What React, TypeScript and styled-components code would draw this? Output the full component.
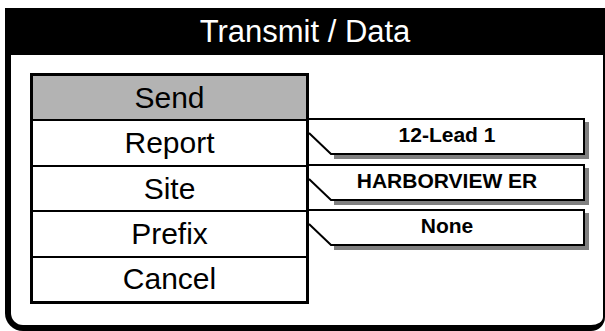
import styled, { createGlobalStyle } from 'styled-components'

const GlobalStyle = createGlobalStyle`
	body {
		margin: 0;
		background: #ffffff;
		font-family: "Liberation Sans", Arial, sans-serif;
	}
`

const Page = styled.div`
	padding: 8px 0 0 5px;
`
const Window = styled.div`
	width: 600px;
`
const TitleBar = styled.div`
	height: 47px;
	background: #000000;
	color: #ffffff;
	font-size: 31px;
	line-height: 47px;
	text-align: center;
`
const Body = styled.div`
	display: flex;
	height: 276px;
	box-sizing: border-box;
	border-left: 6px solid #000000;
	border-right: 2px solid #000000;
	border-bottom: 6px solid #000000;
	border-radius: 0 0 14px 18px;
	padding: 18px 0 0 19px;
`
const Menu = styled.div`
	display: flex;
	flex-direction: column;
	width: 279px;
	height: 231px;
	box-sizing: border-box;
	border: 3px solid #000000;
`
const MenuItem = styled.div<{ $active?: boolean }>`
	flex: 1;
	display: flex;
	align-items: center;
	justify-content: center;
	font-size: 30px;
	color: #000000;
	background: ${(p) => (p.$active ? '#b3b3b3' : '#ffffff')};
	& + & {
		border-top: 2px solid #000000;
	}
`
const Values = styled.div`
	display: flex;
	flex-direction: column;
	gap: 8.5px;
	padding-top: 45px;
`
const ValueBox = styled.div`
	position: relative;
	width: 280px;
	height: 37px;
`
const Outline = styled.svg`
	position: absolute;
	left: 0;
	top: 0;
	overflow: visible;
`
const ValueText = styled.div`
	position: relative;
	width: 276px;
	padding-top: 6px;
	font-size: 21px;
	font-weight: bold;
	line-height: 22px;
	text-align: center;
`

const items = ['Send', 'Report', 'Site', 'Prefix', 'Cancel']
const values = ['12-Lead 1', 'HARBORVIEW ER', 'None']

function Field({ label }: { label: string }) {
	return (
		<ValueBox>
			<Outline width="280" height="41" viewBox="0 0 280 41">
				<path d="M25 37 H276 V4 H280 V41 H25 Z" fill="#808080" />
				<path d="M0 1 H275 V36 H22 L0 15" fill="#ffffff" stroke="#000000" strokeWidth="2" />
			</Outline>
			<ValueText>{label}</ValueText>
		</ValueBox>
	)
}

export default function App() {
	return (
		<Page>
			<GlobalStyle />
			<Window>
				<TitleBar>Transmit / Data</TitleBar>
				<Body>
					<Menu>
						{items.map((item, i) => (
							<MenuItem key={item} $active={i === 0}>{item}</MenuItem>
						))}
					</Menu>
					<Values>
						{values.map((v) => (
							<Field key={v} label={v} />
						))}
					</Values>
				</Body>
			</Window>
		</Page>
	)
}
